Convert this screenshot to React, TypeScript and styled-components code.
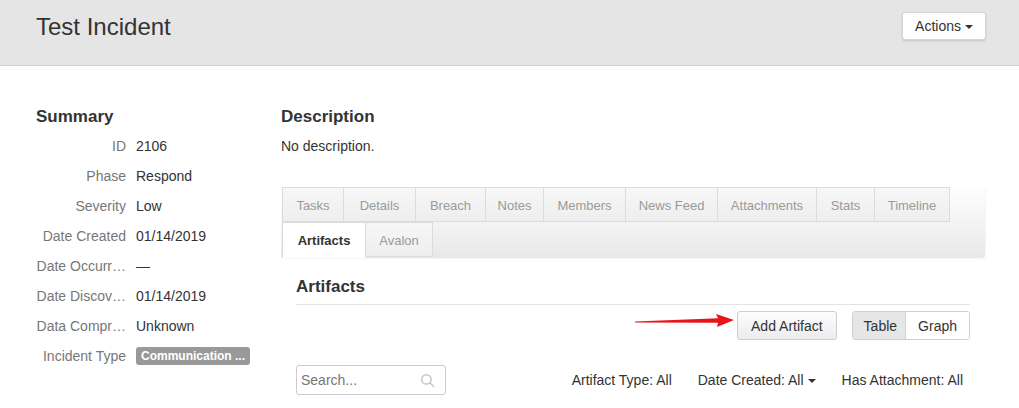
import React from "react";
import styled, { createGlobalStyle } from "styled-components";

const Global = createGlobalStyle`
  html, body { margin: 0; padding: 0; background: #fff; }
  body { font-family: "Liberation Sans", Arial, Helvetica, sans-serif; color: #333; font-size: 14px; }
  * { box-sizing: border-box; }
`;

const Header = styled.header`
  height: 66px;
  background: #e5e5e5;
  border-bottom: 1px solid #cfcfcf;
  display: flex;
  align-items: flex-start;
  justify-content: space-between;
  padding: 0 33px 0 36px;
`;

const Title = styled.h1`
  margin: 13px 0 0;
  font-size: 24px;
  font-weight: 400;
  line-height: 28px;
  color: #333;
`;

const Caret = styled.span`
  display: inline-block;
  width: 0;
  height: 0;
  margin-left: 4px;
  vertical-align: middle;
  border-left: 4px solid transparent;
  border-right: 4px solid transparent;
  border-top: 4px solid #333;
`;

const ActionsButton = styled.button`
  margin-top: 12px;
  height: 28px;
  padding: 0 12px;
  background: #fff;
  border: 1px solid #d5d5d5;
  border-radius: 3px;
  box-shadow: 0 1px 2px rgba(0, 0, 0, 0.15);
  font-family: inherit;
  font-size: 14px;
  color: #333;
`;

const Main = styled.main`
  display: flex;
  padding: 41px 0 0 36px;
`;

const Sidebar = styled.section`
  width: 245px;
  flex: none;
`;

const Heading = styled.h2`
  margin: 0;
  font-size: 17px;
  font-weight: 700;
  line-height: 20px;
  color: #333;
`;

const Fields = styled.dl`
  margin: 4px 0 0;
  display: grid;
  grid-template-columns: 90px 1fr;
  column-gap: 10px;
  grid-auto-rows: 30px;
  align-items: center;
`;

const Label = styled.dt`
  text-align: right;
  color: #777;
  font-size: 14px;
  white-space: nowrap;
`;

const Value = styled.dd`
  margin: 0;
  font-size: 14px;
  color: #333;
`;

const Badge = styled.span`
  display: inline-block;
  height: 18px;
  line-height: 18px;
  padding: 0 5px;
  background: #999;
  color: #fff;
  font-size: 12px;
  font-weight: 700;
  border-radius: 3px;
  white-space: nowrap;
`;

const Content = styled.section`
  width: 704px;
  flex: none;
`;

const Paragraph = styled.p`
  margin: 4px 0 0;
  line-height: 30px;
`;

const TabBar = styled.ul`
  list-style: none;
  margin: 25px 0 0;
  padding: 1px 0 0 1px;
  display: flex;
  flex-wrap: wrap;
  height: 72px;
  background: linear-gradient(#ffffff, #e8e8e8);
  border-radius: 0 0 4px 0;
  box-shadow: 1px 1px 1px rgba(0, 0, 0, 0.04);
`;

const Tab = styled.li<{ $active?: boolean; $w: number }>`
  width: ${(p) => p.$w + 1}px;
  height: ${(p) => (p.$active ? "36px" : "35px")};
  padding-top: 1px;
  margin: 0 -1px -1px 0;
  display: flex;
  align-items: center;
  justify-content: center;
  font-size: 13px;
  border: 1px solid #dcdcdc;
  border-bottom-color: ${(p) => (p.$active ? "#fff" : "#dcdcdc")};
  background: ${(p) => (p.$active ? "#fff" : "linear-gradient(#f7f7f7, #eeeeee)")};
  color: ${(p) => (p.$active ? "#333" : "#9a9a9a")};
  font-weight: ${(p) => (p.$active ? 700 : 400)};
  position: relative;
  z-index: ${(p) => (p.$active ? 1 : 0)};
`;

const Panel = styled.div`
  padding: 19px 15px 0;
`;

const PanelTitle = styled(Heading)`
  padding-bottom: 7px;
  border-bottom: 1px solid #e3e3e3;
`;

const Toolbar = styled.div`
  position: relative;
  margin-top: 6px;
  display: flex;
  justify-content: flex-end;
  gap: 15px;
`;

const Button = styled.button`
  height: 29px;
  padding: 0 13px;
  font-family: inherit;
  font-size: 14px;
  color: #333;
  background: linear-gradient(#fdfdfd, #ececec);
  border: 1px solid #cfcfcf;
  border-radius: 3px;
`;

const Segmented = styled.div`
  display: flex;
  border: 1px solid #d0d0d0;
  border-radius: 3px;
  overflow: hidden;
`;

const Segment = styled.button<{ $active?: boolean }>`
  height: 27px;
  padding: 0 ${(p) => (p.$active ? "8px" : "12px")} 0 ${(p) => (p.$active ? "11px" : "12px")};
  font-family: inherit;
  font-size: 14px;
  color: #333;
  border: none;
  border-right: ${(p) => (p.$active ? "1px solid #d0d0d0" : "none")};
  background: ${(p) => (p.$active ? "#e6e6e6" : "#fff")};
`;

const ArrowMark = styled.svg`
  position: absolute;
  left: 339px;
  top: 2px;
`;

const FilterRow = styled.div`
  margin-top: 25px;
  display: flex;
  align-items: center;
`;

const SearchBox = styled.label`
  width: 150px;
  height: 30px;
  display: flex;
  align-items: center;
  padding: 0 10px 0 4px;
  border: 1px solid #cccccc;
  border-radius: 3px;
  color: #c4c4c4;
`;

const SearchInput = styled.input`
  flex: 1;
  min-width: 0;
  border: none;
  outline: none;
  padding: 0;
  font-family: inherit;
  font-size: 14px;
  color: #333;
  &::placeholder { color: #777; }
`;

const Filters = styled.div`
  margin-left: auto;
  margin-right: 7px;
  display: flex;
  gap: 26px;
  font-size: 14px;
  color: #333;
`;

const Filter = styled.span`
  white-space: nowrap;
`;

const fields: [string, React.ReactNode][] = [
  ["ID", "2106"],
  ["Phase", "Respond"],
  ["Severity", "Low"],
  ["Date Created", "01/14/2019"],
  ["Date Occurr…", "—"],
  ["Date Discov…", "01/14/2019"],
  ["Data Compr…", "Unknown"],
  ["Incident Type", <Badge key="b">Communication ...</Badge>],
];

const tabs: [string, number][] = [
  ["Tasks", 61],
  ["Details", 72],
  ["Breach", 70],
  ["Notes", 58],
  ["Members", 82],
  ["News Feed", 92],
  ["Attachments", 99],
  ["Stats", 58],
  ["Timeline", 75],
  ["Artifacts", 83],
  ["Avalon", 67],
];

function SearchIcon() {
  return (
    <svg width="15" height="15" viewBox="0 0 16 16" fill="none" stroke="currentColor" strokeWidth="1.6" strokeLinecap="round">
      <circle cx="6.8" cy="6.8" r="5" />
      <line x1="10.5" y1="10.5" x2="14.5" y2="14.5" />
    </svg>
  );
}

export default function App() {
  return (
    <>
      <Global />
      <Header>
        <Title>Test Incident</Title>
        <ActionsButton>
          Actions<Caret />
        </ActionsButton>
      </Header>
      <Main>
        <Sidebar>
          <Heading>Summary</Heading>
          <Fields>
            {fields.map(([k, v]) => (
              <React.Fragment key={k}>
                <Label>{k}</Label>
                <Value>{v}</Value>
              </React.Fragment>
            ))}
          </Fields>
        </Sidebar>
        <Content>
          <Heading>Description</Heading>
          <Paragraph>No description.</Paragraph>
          <TabBar>
            {tabs.map(([t, w]) => (
              <Tab key={t} $w={w} $active={t === "Artifacts"}>
                {t}
              </Tab>
            ))}
          </TabBar>
          <Panel>
            <PanelTitle>Artifacts</PanelTitle>
            <Toolbar>
              <ArrowMark width="100" height="16" viewBox="0 0 100 16">
                <polygon points="0,8.5 83,5.2 81,1 99,7 82,14 83,9.8 0,9.6" fill="#e8141a" />
              </ArrowMark>
              <Button>Add Artifact</Button>
              <Segmented>
                <Segment $active>Table</Segment>
                <Segment>Graph</Segment>
              </Segmented>
            </Toolbar>
            <FilterRow>
              <SearchBox>
                <SearchInput placeholder="Search..." />
                <SearchIcon />
              </SearchBox>
              <Filters>
                <Filter>Artifact Type: All</Filter>
                <Filter>
                  Date Created: All<Caret />
                </Filter>
                <Filter>Has Attachment: All</Filter>
              </Filters>
            </FilterRow>
          </Panel>
        </Content>
      </Main>
    </>
  );
}
